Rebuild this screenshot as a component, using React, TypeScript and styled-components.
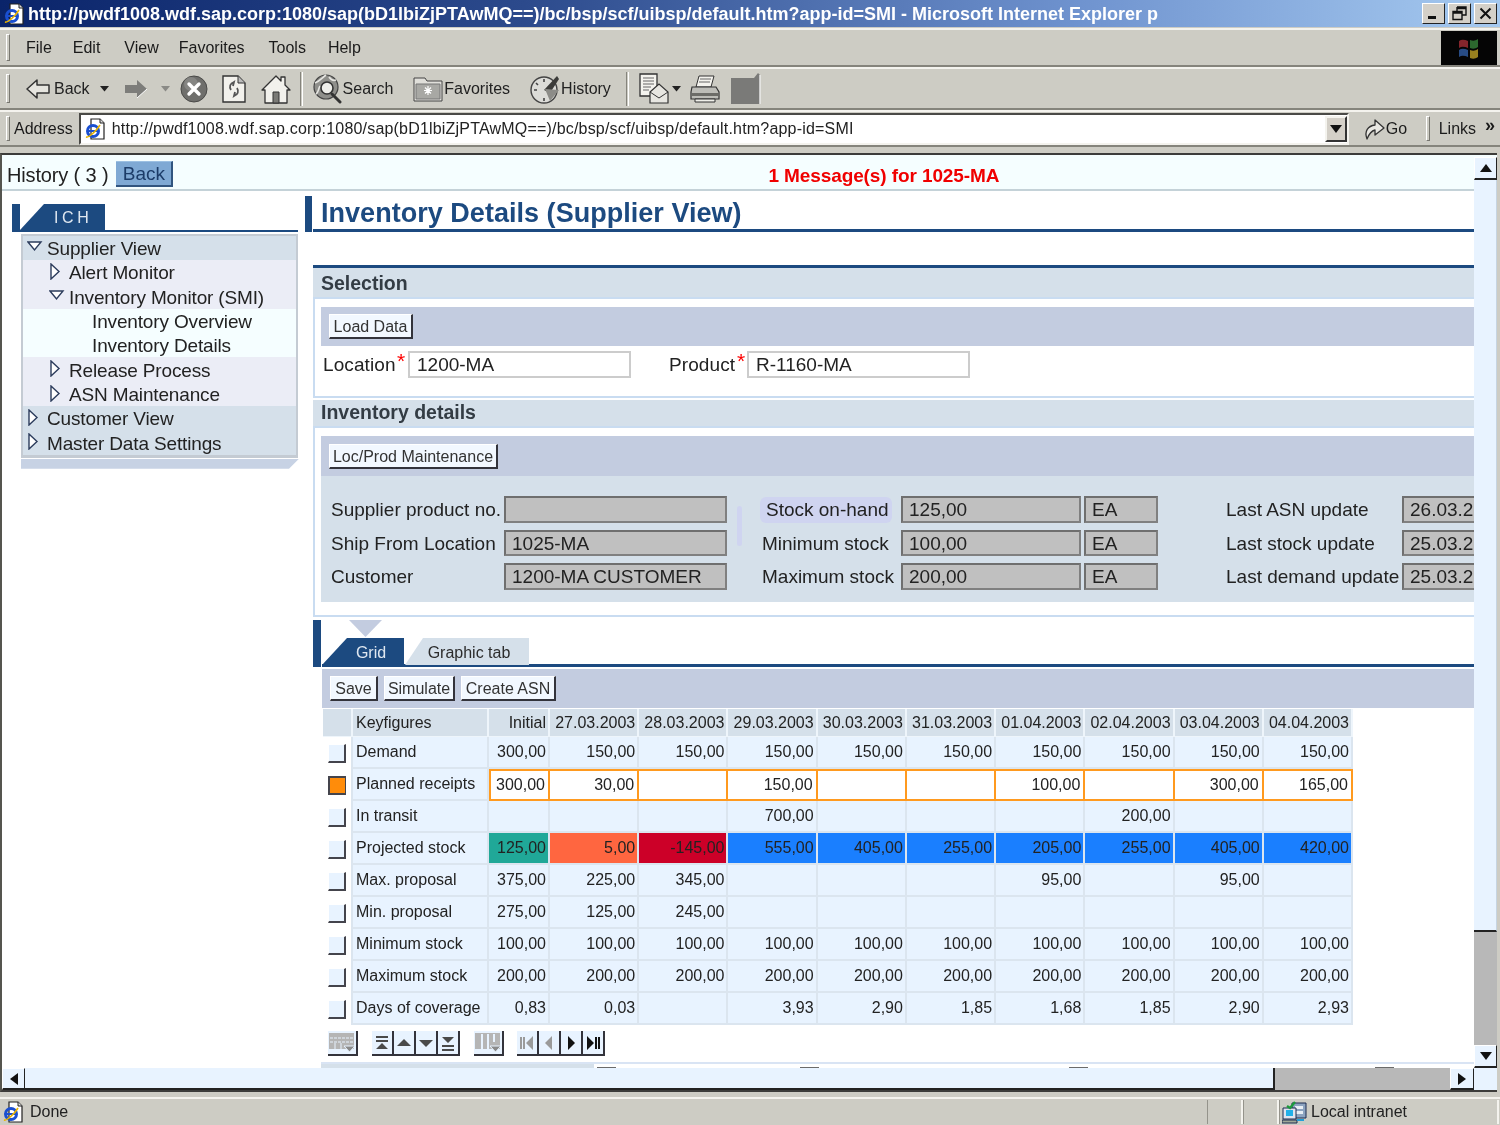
import React from "react";
import styled, { createGlobalStyle } from "styled-components";

const Global = createGlobalStyle`
  html, body { margin: 0; padding: 0; width: 1500px; height: 1125px; overflow: hidden; }
  body { font-family: "Liberation Sans", Arial, sans-serif; color: #1c1c1c; }
  * { box-sizing: border-box; }
`;

const Win = styled.div`
  width: 1500px; height: 1125px; background: #cdccc4; filter: blur(0.35px);
  display: flex; flex-direction: column; overflow: hidden;
`;
const TitleBar = styled.div`
  height: 27px; flex: none; display: flex; align-items: center; padding: 0 3px 0 3px;
  background: linear-gradient(90deg, #0a246a 0%, #2c4a8c 35%, #6f93cf 72%, #a6caf0 100%);
`;
const TitleText = styled.div`
  flex: 1; margin-left: 3px; padding-top: 2px; color: #fff; font-weight: bold; font-size: 18px; white-space: nowrap;
`;
const WinBtn = styled.div`
  width: 23px; height: 21px; margin-left: 3px; background: #d4d0c8;
  border: 1px solid; border-color: #fff #222 #222 #fff; display: flex; align-items: center; justify-content: center;
`;
const Band = styled.div<{ $h: number }>`
  height: ${p => p.$h}px; flex: none; display: flex; align-items: center; position: relative;
  border-top: 2px solid #f4f3ee; border-bottom: 2px solid #85847c; background: #cdccc4;
`;
const MenuBand = styled(Band)`
  margin-top: 1px;
`;
const Grip = styled.div<{ $ml?: number }>`
  width: 4px; height: 76%; flex: none; margin-left: ${p => p.$ml ?? 6}px;
  border: 1px solid; border-color: #fff #77766f #77766f #fff;
`;
const MenuItem = styled.span<{ $ml: number }>`
  margin-left: ${p => p.$ml}px; font-size: 16px; color: #1a1a1a;
`;
const FlagBox = styled.div`
  width: 56px; height: 34px; margin-left: auto; margin-right: 3px; background: #050505;
  display: flex; align-items: center; justify-content: center; flex: none;
`;
const Tool = styled.div<{ $ml: number }>`
  margin-left: ${p => p.$ml}px; display: flex; align-items: center; flex: none; font-size: 16px; color: #222;
`;
const ToolSep = styled.div<{ $ml: number }>`
  margin-left: ${p => p.$ml}px; width: 3px; height: 34px; flex: none;
  border-left: 1px solid #85847c; border-right: 1px solid #fff;
`;
const AddrLabel = styled.span`
  margin-left: 4px; font-size: 16px; color: #1a1a1a;
`;
const AddrBox = styled.div`
  margin-left: 6px; width: 1270px; height: 32px; background: #fff; flex: none;
  border: 2px solid; border-color: #4a4a46 #f4f3ee #f4f3ee #4a4a46;
  display: flex; align-items: center; padding-left: 3px; font-size: 16px; color: #222;
  white-space: nowrap; overflow: hidden;
`;
const AddrUrl = styled.span`
  margin-left: 6px; flex: 1; letter-spacing: 0.19px;
`;
const ComboBtn = styled.div`
  width: 22px; height: 26px; background: #d4d0c8; flex: none;
  border: 2px solid; border-color: #f4f3ee #333 #333 #f4f3ee; display: flex; align-items: center; justify-content: center;
`;
const GoWrap = styled.div`
  margin-left: 15px; display: flex; align-items: center; font-size: 16px; width: 62px; flex: none;
`;
const Links = styled.span`
  margin-left: 9px; font-size: 16px;
`;
const Chevrons = styled.span`
  margin-left: 9px; margin-top: -8px; font-size: 18px; font-weight: bold; line-height: 1;
`;

const Frame = styled.div`
  margin-top: 6px; width: 1497px; height: 939px; flex: none; display: flex; flex-direction: column;
  border-top: 2px solid #3c3c3a; border-left: 2px solid #55554f; border-bottom: 2px solid #3c3c3a; background: #fff;
`;
const FrameTop = styled.div`
  flex: 1; min-height: 0; display: flex;
`;
const Page = styled.div`
  width: 1472px; height: 913px; flex: none; overflow: hidden; display: flex; flex-direction: column; background: #fff;
`;
const HistoryBar = styled.div`
  height: 36px; flex: none; display: flex; align-items: center; padding: 7px 0 0 5px;
  background: #f5feff; border-bottom: 2px solid #c4d2d8; font-size: 20px; color: #222;
`;
const HistoryText = styled.span`
  letter-spacing: -0.15px; white-space: pre;
`;
const BackBtn = styled.div`
  margin-left: 8px; width: 57px; height: 26px; background: #7fa9d4; color: #1c3c68; text-align: center;
  line-height: 24px; font-size: 19px; margin-top: -4px;
  border-right: 2px solid #31557f; border-bottom: 2px solid #31557f; border-top: 1px solid #9cc0e2; 
`;
const Message = styled.span`
  margin-left: 595px; color: #f00000; font-weight: bold; font-size: 19px; letter-spacing: -0.1px;
`;
const Body = styled.div`
  flex: 1; min-height: 0; display: flex; padding-left: 10px;
`;
const NavCol = styled.div`
  width: 286px; flex: none; margin-right: 7px; padding-top: 13px;
`;
const NavHead = styled.div`
  height: 28px; display: flex; align-items: flex-end; border-bottom: 2px solid #1c4a80;
  position: relative;
`;
const NavBar = styled.div`
  position: absolute; left: 0; top: 0; width: 8px; height: 28px; background: #1c4a80;
`;
const NavTab = styled.div`
  margin-left: 8px; width: 85px; height: 26px; color: #dfe7f0; background: #1c4a80; font-size: 16px;
  letter-spacing: 3.6px; padding-left: 34px; line-height: 27px;
  clip-path: polygon(24px 0, 100% 0, 100% 100%, 0 100%);
`;
const NavList = styled.div`
  margin: 2px 0 0 9px; width: 277px; border: 2px solid #c4cbd3; border-bottom-width: 3px;
  display: flex; flex-direction: column;
`;
const NavRow = styled.div<{ $level: number }>`
  height: 24.3px; display: flex; align-items: center; font-size: 19px; letter-spacing: -0.15px; color: #222;
  white-space: nowrap; position: relative; padding-top: 2px;
  padding-left: ${p => [24, 46, 69][p.$level]}px;
  background: ${p => ["#d5e0ea", "#ebedf6", "#f5feff"][p.$level]};
`;
const NavArrow = styled.svg<{ $level: number }>`
  position: absolute; top: 3px; left: ${p => [4, 26][p.$level]}px;
`;
const NavFoot = styled.div`
  margin: 1px 0 0 9px; width: 278px; height: 10px; background: #c7d2e4;
  clip-path: polygon(0 0, 100% 0, calc(100% - 10px) 100%, 0 100%);
`;

const MainCol = styled.div`
  flex: 1; min-width: 0; overflow: hidden; position: relative; display: flex; flex-direction: column;
`;
const TitleRow = styled.div`
  height: 36px; margin-top: 5px; flex: none; display: flex;
`;
const TitleMark = styled.div`
  width: 7px; background: #1c4a80; flex: none; margin-right: 1px;
`;
const PageTitle = styled.h1`
  flex: 1; margin: 0; font-size: 27px; font-weight: bold; color: #1c4a80; padding-left: 8px; line-height: 34px;
  border-bottom: 3px solid #1c4a80; letter-spacing: 0.03px; white-space: nowrap;
`;
const SectionWrap = styled.div<{ $mt: number }>`
  margin: ${p => p.$mt}px 0 0 8px; flex: none;
`;
const SectionHead = styled.div<{ $line?: boolean; $h: number }>`
  height: ${p => p.$h}px; background: #d5e0ea; color: #333c44; font-weight: bold; font-size: 19.5px;
  padding: ${p => (p.$line ? "2px 0 0 8px" : "0 0 2px 8px")};
  display: flex; align-items: center;
  border-top: ${p => (p.$line ? "3px solid #1c4a80" : "none")};
  border-bottom: 2px solid #c9dcf1;
`;
const SectionBody = styled.div<{ $h: number; $pt: number }>`
  height: ${p => p.$h}px; padding: ${p => p.$pt}px 0 0 6px;
  border-left: 2px solid #c9dcf1; border-bottom: 2px solid #c9dcf1;
`;
const ActionBar = styled.div<{ $h: number; $mt?: number }>`
  height: ${p => p.$h}px; margin-top: ${p => p.$mt ?? 0}px; background: #c3cce0; display: flex; align-items: center; padding-left: 8px; gap: 6px;
`;
const ActionBtn = styled.div<{ $w: number }>`
  width: ${p => p.$w}px; height: 25px; background: #f2f8ff; font-size: 16px; color: #333; text-align: center;
  line-height: 23px; white-space: nowrap; border: 1px solid #fff;
  border-right: 2px solid #33333b; border-bottom: 2px solid #33333b;
`;
const SelFields = styled.div`
  display: flex; align-items: center; margin: 5px 0 0 2px; font-size: 19px; color: #222;
`;
const Star = styled.span<{ $w: number }>`
  color: #f00; width: ${p => p.$w}px; font-size: 21px; align-self: flex-start; line-height: 19px; flex: none;
`;
const TextInput = styled.div`
  width: 223px; height: 27px; border: 2px solid #ccc; background: #fff; padding-left: 7px; line-height: 23px; flex: none;
`;
const FieldLabelA = styled.span<{ $w: number; $ml?: number }>`
  width: ${p => p.$w}px; margin-left: ${p => p.$ml ?? 0}px; flex: none; white-space: nowrap; letter-spacing: 0.1px;
`;
const DetailPanel = styled.div`
  background: #d5e0ea; height: 126px; padding: 20px 0 0 10px; display: grid; overflow: hidden;
  grid-template-columns: 173px 223px 35px 139px 180px 3px 74px 68px 176px 100px;
  grid-auto-rows: 26.5px; row-gap: 7px; align-items: center; font-size: 19px; color: #222;
  white-space: nowrap;
`;
const DisabledInput = styled.div<{ $col: number }>`
  grid-column: ${p => p.$col}; height: 26.5px; background: #c0c0c0; border: 2px solid; border-color: #6f6f6f #808080 #808080 #6f6f6f;
  padding-left: 6px; line-height: 24px; overflow: hidden;
`;
const DetailLabel = styled.span<{ $col: number }>`
  grid-column: ${p => p.$col}; position: relative; z-index: 0; padding-top: 2px;
`;
const Brush = styled.span`
  margin-left: 4px; position: relative;
  &::before {
    content: ""; position: absolute; left: -6px; right: -3px; top: -2px; bottom: -3px; z-index: -1;
    background: #cfd4f0; border-radius: 6px;
  }
  &::after {
    content: ""; position: absolute; left: -29px; top: 7px; width: 5px; height: 40px; border-radius: 3px;
    background: #cfd4f0; z-index: -1;
  }
`;
const TabStrip = styled.div`
  position: relative; margin: 3px 0 0 8px; height: 47px; flex: none; padding-left: 9px; display: flex; align-items: flex-end;
`;
const TabMark = styled.div`
  position: absolute; left: 0; top: 0; bottom: 0; width: 8px; background: #1c4a80;
`;
const TabPointer = styled.div`
  position: absolute; left: 36px; top: 0; width: 33px; height: 17px; background: #c3cce0;
  clip-path: polygon(0 0, 100% 0, 50% 100%);
`;
const TabLine = styled.div`
  position: absolute; left: 9px; right: 0; bottom: 0; height: 3px; background: #1c4a80;
`;
const GridTab = styled.div<{ $on?: boolean }>`
  height: 27px; margin-bottom: 2px; font-size: 16px; line-height: 29px; text-align: center;
  width: ${p => (p.$on ? 82 : 124)}px; margin-left: ${p => (p.$on ? 0 : 1)}px;
  padding-left: ${p => (p.$on ? 16 : 4)}px;
  color: ${p => (p.$on ? "#dfe7f0" : "#2c2c2c")}; background: ${p => (p.$on ? "#1c4a80" : "#d5e0ea")};
  clip-path: polygon(${p => (p.$on ? 25 : 18)}px 0, 100% 0, 100% 100%, 0 100%);
`;
const GridArea = styled.div`
  margin-left: 17px; flex: none;
`;
const GridTable = styled.table`
  margin: 1px 0 0 1px; width: 1030px; table-layout: fixed; border-collapse: separate; border-spacing: 0; font-size: 16px; color: #222;
`;
const Th = styled.th<{ $left?: boolean }>`
  height: 28px; background: #d5e0ea; font-weight: normal; padding: 0 2px 0 ${p => (p.$left ? 3 : 0)}px; 
  text-align: ${p => (p.$left ? "left" : "right")}; white-space: nowrap; overflow: hidden;
  border-right: 2px solid #eef5fb; border-bottom: 1px solid #eef5fb;
`;
const Td = styled.td<{ $bg?: string; $orange?: boolean }>`
  height: 32px; padding: 0 ${p => (p.$orange ? 3 : 2)}px 0 0; text-align: right; white-space: nowrap; overflow: hidden;
  background: ${p => p.$bg ?? (p.$orange ? "#fff" : "#e8f3ff")};
  border-right: 2px solid ${p => (p.$orange ? "#ff9a1f" : "#dbe5ef")};
  border-bottom: 2px solid ${p => (p.$orange ? "#ff9a1f" : "#dbe5ef")};
  border-top: ${p => (p.$orange ? "2px solid #ff9a1f" : "0")};
  &:nth-of-type(3) { border-left: ${p => (p.$orange ? "2px solid #ff9a1f" : "0")}; }
`;
const TdName = styled.td`
  height: 32px; padding-left: 3px; background: #e8f3ff; white-space: nowrap; overflow: hidden;
  border-right: 2px solid #dbe5ef; border-bottom: 2px solid #dbe5ef;
`;
const TdCheck = styled.td`
  height: 32px; background: #fff; border-right: 2px solid #dbe5ef; padding-left: 5px;
`;
const RowCheck = styled.div<{ $on?: boolean }>`
  width: 18px; height: 19px; background: ${p => (p.$on ? "#ff8c0a" : "#e8f3ff")};
  border: 1px solid;
  border-color: ${p => (p.$on ? "#44444c" : "#fff")};
  border-right: ${p => (p.$on ? "1px" : "2px")} solid #44444c; border-bottom: 2px solid #44444c;
  ${p => p.$on && "border-top-width:2px;border-left-width:2px;"}
`;
const Pager = styled.div`
  margin: 6px 0 0 6px; display: flex; height: 26px;
`;
const PagerBtn = styled.div<{ $w?: number; $ml?: number }>`
  width: ${p => p.$w ?? 22}px; height: 25px; margin-left: ${p => p.$ml ?? 0}px; background: #e8f3ff; flex: none;
  border-bottom: 2px solid #33333b; border-right: 2px solid #33333b;
  display: flex; align-items: center; justify-content: center;
`;
const ClipStrip = styled.div`
  margin: 5px 0 0 -1px; height: 8px; width: 1153px; display: flex; border-top: 2px solid #d9e4f4; align-items: flex-start;
`;
const ClipBar = styled.div`
  width: 273px; height: 6px; background: #d5e0ea; flex: none;
`;
const ClipMark = styled.div<{ $ml: number }>`
  margin: 3px 0 0 ${p => p.$ml}px; width: 19px; height: 2px; background: #6b6b6b; flex: none;
`;

const VScroll = styled.div`
  width: 23px; height: 913px; flex: none; display: flex; flex-direction: column; background: #b8b8b8;
`;
const ScrollBtn = styled.div<{ $w?: number; $h?: number }>`
  width: ${p => p.$w ?? 23}px; height: ${p => p.$h ?? 23}px; background: #e8f3ff; flex: none;
  border: 1px solid #fff; border-right: 1px solid #222; border-bottom: 2px solid #222;
  display: flex; align-items: center; justify-content: center;
`;
const VThumb = styled.div`
  height: 752px; flex: none; background: #e8f3ff; border-bottom: 2px solid #222; border-right: 1px solid #c6d4e2;
`;
const VGap = styled.div`
  flex: 1;
`;
const VTop = styled.div`
  height: 2px; background: #f5feff; flex: none;
`;
const HScroll = styled.div`
  height: 22px; flex: none; display: flex; background: #e8f3ff;
`;
const HThumb = styled.div`
  width: 1250px; flex: none; background: #e8f3ff; border-right: 2px solid #222; border-bottom: 2px solid #222;
`;
const HTrack = styled.div`
  width: 175px; flex: none; background: #b8b8b8;
`;
const Status = styled.div`
  margin-top: 5px; height: 28px; flex: none; display: flex; align-items: center; padding-left: 2px;
  border-top: 2px solid #f4f3ee; font-size: 16px; color: #222; background: #cdccc4;
`;
const StatusCell = styled.div<{ $w: number }>`
  width: ${p => p.$w}px; height: 24px; flex: none; display: flex; align-items: center; padding-left: 2px;
  border-right: 2px solid #f4f3ee; border-left: 1px solid #94938b; 
`;
const StatusDone = styled.span`
  margin-left: 6px; width: 1177px; flex: none;
`;
const StatusText = styled.span`
  margin-left: 4px;
`;

/* ---------- drawings ---------- */
const IeLogo = ({ s = 22 }: { s?: number }) => (
  <svg width={s} height={s} viewBox="0 0 22 22">
    <path d="M7 1h9l4 4v16H7z" fill="#fff" stroke="#222" strokeWidth="1.2" />
    <path d="M16 1v4h4" fill="#ddd" stroke="#222" />
    <circle cx="9" cy="13" r="5.500" fill="none" stroke="#1a4fd0" strokeWidth="3" />
    <path d="M4 13h10" stroke="#1a4fd0" strokeWidth="2" />
    <path d="M2 19C5 20 13 12 16 7" fill="none" stroke="#e8b400" strokeWidth="1.600" />
  </svg>
);
const BackIco = () => (
  <svg width="24" height="22" viewBox="0 0 24 22">
    <path d="M1 11 11 2v5h12v8H11v5z" fill="#e6e5df" stroke="#333" strokeWidth="1.500" strokeLinejoin="round" />
  </svg>
);
const FwdIco = () => (
  <svg width="24" height="22" viewBox="0 0 24 22">
    <path d="M23 11 13 2v5H1v8h12v5z" fill="#7d7d7a" />
    <path d="M13 20 23 11" stroke="#fff" strokeWidth="1" />
  </svg>
);
const Drop = ({ c = "#222" }: { c?: string }) => (
  <svg width="9" height="6" viewBox="0 0 9 6"><path d="M0 0h9L4.500 5.500z" fill={c} /></svg>
);
const StopIco = () => (
  <svg width="28" height="28" viewBox="0 0 28 28">
    <circle cx="14" cy="14" r="13" fill="#6f6f6c" stroke="#4a4a48" />
    <circle cx="11" cy="9" r="7" fill="#8f8f8b" opacity=".7" />
    <path d="M9 9 19 19M19 9 9 19" stroke="#fff" strokeWidth="3.400" strokeLinecap="round" />
  </svg>
);
const RefreshIco = () => (
  <svg width="26" height="30" viewBox="0 0 26 30">
    <path d="M2 2h15l7 7v19H2z" fill="#f2f1ec" stroke="#333" strokeWidth="1.400" />
    <path d="M17 2v7h7" fill="#bbb" stroke="#333" />
    <path d="M13 8c-4 1-5 5-3 8M10 10l3-2-1 4M13 22c4-1 5-5 3-8M16 20l-3 2 1-4" fill="none" stroke="#555" strokeWidth="1.800" />
  </svg>
);
const HomeIco = () => (
  <svg width="30" height="30" viewBox="0 0 30 30">
    <path d="M1 16 15 2l5 5V3h4v8l5 5h-3v13H4V16z" fill="#f2f1ec" stroke="#333" strokeWidth="1.300" strokeLinejoin="round" />
    <path d="M12 29V18h6v11z" fill="#7a7a76" stroke="#333" />
  </svg>
);
const SearchIco = () => (
  <svg width="30" height="30" viewBox="0 0 30 30">
    <circle cx="14" cy="13" r="12" fill="#8f8f8b" stroke="#444" strokeWidth="1.200" />
    <path d="M3 9c5-2 8-6 11-8M24 6c-3 1-5 0-7-3M4 20c3-2 2-5 4-8" fill="none" stroke="#e6e6e2" strokeWidth="1.600" />
    <circle cx="15" cy="14" r="6" fill="#eeeeea" stroke="#333" strokeWidth="1.600" />
    <path d="M20 20 28 28" stroke="#333" strokeWidth="3" strokeLinecap="round" />
  </svg>
);
const FavIco = () => (
  <svg width="30" height="27" viewBox="0 0 30 27">
    <path d="M1 8V3h11l2 3h15v20H1z" fill="#e0dfda" stroke="#444" />
    <path d="M3 9h24v15H3z" fill="#a8a8a4" stroke="#777" />
    <path d="M15 11v9M11 15.500h8M12 12.500l6 6M18 12.500l-6 6" stroke="#fff" strokeWidth="1.200" />
  </svg>
);
const HistIco = () => (
  <svg width="30" height="30" viewBox="0 0 30 30">
    <circle cx="14" cy="16" r="13" fill="#dcdcd8" stroke="#444" strokeWidth="1.400" />
    <path d="M14 5v3M4 16h3M14 24v3M22 22l-2-2M6 9l2 2" stroke="#444" strokeWidth="1.600" />
    <path d="M14 16 27 2l2 3-9 14-6-3z" fill="#3c3c3a" />
    <path d="M15 15 29 16 20 27z" fill="#8c8c88" />
  </svg>
);
const EditIco = () => (
  <svg width="30" height="31" viewBox="0 0 30 31">
    <path d="M1 1h17v22H1z" fill="#f4f3ee" stroke="#333" strokeWidth="1.300" />
    <path d="M4 5h11M4 8h11M4 11h11M4 14h8M4 17h6" stroke="#666" strokeWidth="1.200" />
    <path d="M11 19 20 11l9 8v11H11z" fill="#e7e6e1" stroke="#333" strokeWidth="1.200" />
    <path d="M11 19l9 6 9-6" fill="none" stroke="#333" />
  </svg>
);
const PrintIco = () => (
  <svg width="30" height="28" viewBox="0 0 30 28">
    <path d="M9 1h15l-3 11H6z" fill="#f4f3ee" stroke="#333" />
    <path d="M10 4h11M9 7h11" stroke="#666" />
    <path d="M2 12h24l3 5v7H1v-7z" fill="#bdbdb8" stroke="#333" strokeWidth="1.200" />
    <path d="M2 18h26v3H2z" fill="#6c6c68" />
    <path d="M5 24h20v3H5z" fill="#efefe9" stroke="#333" />
  </svg>
);
const GrayBoxIco = () => (
  <svg width="30" height="31" viewBox="0 0 30 31">
    <path d="M0 5h23l4-5 2 2v29H0z" fill="#7a7a78" />
    <path d="M29 2v29" stroke="#eee" strokeWidth="1.400" />
  </svg>
);
const GoIco = () => (
  <svg width="22" height="24" viewBox="0 0 22 24">
    <path d="M3 22C0 14 4 9 11 8V3l9 8-9 7v-5c-4 1-6 4-8 9z" fill="#e8e7e2" stroke="#333" strokeWidth="1.300" strokeLinejoin="round" />
  </svg>
);
const WinFlag = () => (
  <svg width="26" height="24" viewBox="0 0 26 24" opacity=".75">
    <path d="M3 5c3-2 6-1 9 0v7c-3-1-6-2-9 0z" fill="#b0303a" />
    <path d="M14 4c3 1 5 1 8-1v8c-3 2-5 2-8 1z" fill="#3a8a3c" />
    <path d="M3 14c3-2 6-1 9 0v7c-3-1-6-2-9 0z" fill="#3464b0" />
    <path d="M14 14c3 1 5 1 8-1v8c-3 2-5 2-8 1z" fill="#c8a828" />
  </svg>
);
const ArrowTri = ({ dir, c = "#111", s = 12 }: { dir: "u" | "d" | "l" | "r"; c?: string; s?: number }) => {
  const d = { u: "M6 2 12 10H0z", d: "M0 2h12L6 10z", l: "M2 6 10 0v12z", r: "M10 6 2 0v12z" }[dir];
  return <svg width={s} height={s} viewBox="0 0 12 12"><path d={d} fill={c} /></svg>;
};
const IntranetIco = () => (
  <svg width="25" height="24" viewBox="0 0 25 24">
    <path d="M10 3h14v15H10z" fill="#8da4c0" stroke="#1c2c50" />
    <path d="M13 6h8v3h-8zM13 11h8v3h-8z" fill="#e8eef4" />
    <path d="M1 8h13v11H1z" fill="#dfe4ee" stroke="#1c2c50" />
    <path d="M4 10h7v6H4z" fill="#22b0e8" />
    <path d="M0 20h15v3H0z" fill="#a0a898" stroke="#1c2c50" />
    <path d="M5 6l3 2 5-6" fill="none" stroke="#1c9a3c" strokeWidth="2.400" />
    <path d="M15 20h7" stroke="#22a0d8" strokeWidth="2" />
  </svg>
);
const TableSetIco = () => (
  <svg width="26" height="20" viewBox="0 0 26 20">
    <path d="M0 0h25v16H0z" fill="#b5b5b5" />
    <path d="M1 5h23M1 9h23" stroke="#e8f3ff" strokeWidth="1" strokeDasharray="3 1" />
    <path d="M6 10v6M12 10v6" stroke="#e8f3ff" />
    <path d="M15 13h11l-5.500 6z" fill="#8a8a8a" stroke="#e8f3ff" />
  </svg>
);
const ColsIco = () => (
  <svg width="26" height="20" viewBox="0 0 26 20">
    <path d="M0 0h25v16H0z" fill="#b5b5b5" />
    <path d="M7 1v15M13 1v15M19 1v8" stroke="#e8f3ff" strokeWidth="2" />
    <path d="M15 13h11l-5.500 6z" fill="#8a8a8a" stroke="#e8f3ff" />
  </svg>
);
const PageIco = ({ d, c = "#4a4a4a" }: { d: string; c?: string }) => (
  <svg width="16" height="16" viewBox="0 0 16 16"><path d={d} fill={c} /></svg>
);

/* ---------- data ---------- */
const dates = ["27.03.2003", "28.03.2003", "29.03.2003", "30.03.2003", "31.03.2003", "01.04.2003", "02.04.2003", "03.04.2003", "04.04.2003"];
type Row = { name: string; on?: boolean; orange?: boolean; colors?: string[]; vals: string[] };
const B = "#1a7fff";
const rows: Row[] = [
  { name: "Demand", vals: ["300,00", "150,00", "150,00", "150,00", "150,00", "150,00", "150,00", "150,00", "150,00", "150,00"] },
  { name: "Planned receipts", on: true, orange: true, vals: ["300,00", "30,00", "", "150,00", "", "", "100,00", "", "300,00", "165,00"] },
  { name: "In transit", vals: ["", "", "", "700,00", "", "", "", "200,00", "", ""] },
  { name: "Projected stock", colors: ["#20a898", "#ff6640", "#cc0028", B, B, B, B, B, B, B], vals: ["125,00", "5,00", "-145,00", "555,00", "405,00", "255,00", "205,00", "255,00", "405,00", "420,00"] },
  { name: "Max. proposal", vals: ["375,00", "225,00", "345,00", "", "", "", "95,00", "", "95,00", ""] },
  { name: "Min. proposal", vals: ["275,00", "125,00", "245,00", "", "", "", "", "", "", ""] },
  { name: "Minimum stock", vals: ["100,00", "100,00", "100,00", "100,00", "100,00", "100,00", "100,00", "100,00", "100,00", "100,00"] },
  { name: "Maximum stock", vals: ["200,00", "200,00", "200,00", "200,00", "200,00", "200,00", "200,00", "200,00", "200,00", "200,00"] },
  { name: "Days of coverage", vals: ["0,83", "0,03", "", "3,93", "2,90", "1,85", "1,68", "1,85", "2,90", "2,93"] },
];
const nav: { label: string; level: number; arrow?: "r" | "d" }[] = [
  { label: "Supplier View", level: 0, arrow: "d" },
  { label: "Alert Monitor", level: 1, arrow: "r" },
  { label: "Inventory Monitor (SMI)", level: 1, arrow: "d" },
  { label: "Inventory Overview", level: 2 },
  { label: "Inventory Details", level: 2 },
  { label: "Release Process", level: 1, arrow: "r" },
  { label: "ASN Maintenance", level: 1, arrow: "r" },
  { label: "Customer View", level: 0, arrow: "r" },
  { label: "Master Data Settings", level: 0, arrow: "r" },
];
const URL_TEXT = "http://pwdf1008.wdf.sap.corp:1080/sap(bD1lbiZjPTAwMQ==)/bc/bsp/scf/uibsp/default.htm?app-id=SMI";

export default function App() {
  return (
    <Win>
      <Global />
      <TitleBar>
        <IeLogo />
        <TitleText>{URL_TEXT} - Microsoft Internet Explorer p</TitleText>
        <WinBtn><svg width="13" height="13" viewBox="0 0 13 13"><path d="M1 9h8v3H1z" fill="#111" /></svg></WinBtn>
        <WinBtn><svg width="15" height="15" viewBox="0 0 15 15"><path d="M5 1h9v8h-4M5 1v4M5 2.500h9M1 5.500h9v8H1zM1 7h9" fill="none" stroke="#111" strokeWidth="1.400" /></svg></WinBtn>
        <WinBtn><svg width="13" height="13" viewBox="0 0 13 13"><path d="M1.500 1.500 11.500 11.500M11.500 1.500 1.500 11.500" stroke="#111" strokeWidth="2" /></svg></WinBtn>
      </TitleBar>
      <MenuBand $h={39}>
        <Grip />
        <MenuItem $ml={16}>File</MenuItem>
        <MenuItem $ml={21}>Edit</MenuItem>
        <MenuItem $ml={24}>View</MenuItem>
        <MenuItem $ml={20}>Favorites</MenuItem>
        <MenuItem $ml={24}>Tools</MenuItem>
        <MenuItem $ml={22}>Help</MenuItem>
        <FlagBox><WinFlag /></FlagBox>
      </MenuBand>
      <Band $h={43}>
        <Grip />
        <Tool $ml={16}><BackIco /></Tool>
        <Tool $ml={4}>Back</Tool>
        <Tool $ml={10}><Drop /></Tool>
        <Tool $ml={15}><FwdIco /></Tool>
        <Tool $ml={13}><Drop c="#8a8a86" /></Tool>
        <Tool $ml={10}><StopIco /></Tool>
        <Tool $ml={13}><RefreshIco /></Tool>
        <Tool $ml={14}><HomeIco /></Tool>
        <ToolSep $ml={9} />
        <Tool $ml={9}><SearchIco /></Tool>
        <Tool $ml={1}>Search</Tool>
        <Tool $ml={20}><FavIco /></Tool>
        <Tool $ml={1}>Favorites</Tool>
        <Tool $ml={20}><HistIco /></Tool>
        <Tool $ml={1}>History</Tool>
        <ToolSep $ml={15} />
        <Tool $ml={10}><EditIco /></Tool>
        <Tool $ml={3}><Drop /></Tool>
        <Tool $ml={9}><PrintIco /></Tool>
        <Tool $ml={11}><GrayBoxIco /></Tool>
      </Band>
      <Band $h={37}>
        <Grip />
        <AddrLabel>Address</AddrLabel>
        <AddrBox>
          <IeLogo />
          <AddrUrl>{URL_TEXT}</AddrUrl>
          <ComboBtn><ArrowTri dir="d" /></ComboBtn>
        </AddrBox>
        <GoWrap><GoIco />Go</GoWrap>
        <Grip $ml={0} />
        <Links>Links</Links>
        <Chevrons>»</Chevrons>
      </Band>
      <Frame>
        <FrameTop>
          <Page>
            <HistoryBar>
              <HistoryText>History ( 3 )</HistoryText>
              <BackBtn>Back</BackBtn>
              <Message>1 Message(s) for 1025-MA</Message>
            </HistoryBar>
            <Body>
              <NavCol>
                <NavHead>
                  <NavBar />
                  <NavTab>ICH</NavTab>
                </NavHead>
                <NavList>
                  {nav.map(n => (
                    <NavRow key={n.label} $level={n.level}>
                      {n.arrow && (
                        <NavArrow $level={n.level} width="16" height="17" viewBox="0 0 16 17">
                          {n.arrow === "r"
                            ? <path d="M2 1 10 8.500 2 16z" fill="#fff" stroke="#2c3c5c" strokeWidth="1.400" />
                            : <path d="M1 3h13L7.500 11z" fill="#fff" stroke="#2c3c5c" strokeWidth="1.400" />}
                        </NavArrow>
                      )}
                      {n.label}
                    </NavRow>
                  ))}
                </NavList>
                <NavFoot />
              </NavCol>
              <MainCol>
                <TitleRow>
                  <TitleMark />
                  <PageTitle>Inventory Details (Supplier View)</PageTitle>
                </TitleRow>
                <SectionWrap $mt={33}>
                  <SectionHead $line $h={34}>Selection</SectionHead>
                  <SectionBody $h={99} $pt={8}>
                    <ActionBar $h={39}><ActionBtn $w={84}>Load Data</ActionBtn></ActionBar>
                    <SelFields>
                      <FieldLabelA $w={74}>Location</FieldLabelA>
                      <Star $w={11}>*</Star>
                      <TextInput>1200-MA</TextInput>
                      <FieldLabelA $w={68} $ml={38}>Product</FieldLabelA>
                      <Star $w={10}>*</Star>
                      <TextInput>R-1160-MA</TextInput>
                    </SelFields>
                  </SectionBody>
                </SectionWrap>
                <SectionWrap $mt={2}>
                  <SectionHead $h={28}>Inventory details</SectionHead>
                  <SectionBody $h={189} $pt={8}>
                    <ActionBar $h={40}><ActionBtn $w={169}>Loc/Prod Maintenance</ActionBtn></ActionBar>
                    <DetailPanel>
                      <DetailLabel $col={1}>Supplier product no.</DetailLabel>
                      <DisabledInput $col={2} />
                      <DetailLabel $col={4}><Brush>Stock on-hand</Brush></DetailLabel>
                      <DisabledInput $col={5}>125,00</DisabledInput>
                      <DisabledInput $col={7}>EA</DisabledInput>
                      <DetailLabel $col={9}>Last ASN update</DetailLabel>
                      <DisabledInput $col={10}>26.03.2003</DisabledInput>

                      <DetailLabel $col={1}>Ship From Location</DetailLabel>
                      <DisabledInput $col={2}>1025-MA</DisabledInput>
                      <DetailLabel $col={4}>Minimum stock</DetailLabel>
                      <DisabledInput $col={5}>100,00</DisabledInput>
                      <DisabledInput $col={7}>EA</DisabledInput>
                      <DetailLabel $col={9}>Last stock update</DetailLabel>
                      <DisabledInput $col={10}>25.03.2003</DisabledInput>

                      <DetailLabel $col={1}>Customer</DetailLabel>
                      <DisabledInput $col={2}>1200-MA CUSTOMER</DisabledInput>
                      <DetailLabel $col={4}>Maximum stock</DetailLabel>
                      <DisabledInput $col={5}>200,00</DisabledInput>
                      <DisabledInput $col={7}>EA</DisabledInput>
                      <DetailLabel $col={9}>Last demand update</DetailLabel>
                      <DisabledInput $col={10}>25.03.2003</DisabledInput>
                    </DetailPanel>
                  </SectionBody>
                </SectionWrap>
                <TabStrip>
                  <TabMark />
                  <TabPointer />
                  <TabLine />
                  <GridTab $on>Grid</GridTab>
                  <GridTab>Graphic tab</GridTab>
                </TabStrip>
                <GridArea>
                  <ActionBar $h={39} $mt={2}>
                    <ActionBtn $w={48}>Save</ActionBtn>
                    <ActionBtn $w={71}>Simulate</ActionBtn>
                    <ActionBtn $w={95}>Create ASN</ActionBtn>
                  </ActionBar>
                  <GridTable>
                    <colgroup>
                      <col width={30} />
                      <col width={136} />
                      <col width={61} />
                      {dates.map(d => <col key={d} />)}
                    </colgroup>
                    <thead>
                      <tr>
                        <Th />
                        <Th $left>Keyfigures</Th>
                        <Th>Initial</Th>
                        {dates.map(d => <Th key={d}>{d}</Th>)}
                      </tr>
                    </thead>
                    <tbody>
                      {rows.map(r => (
                        <tr key={r.name}>
                          <TdCheck><RowCheck $on={r.on} /></TdCheck>
                          <TdName>{r.name}</TdName>
                          {r.vals.map((v, i) => (
                            <Td key={i} $orange={r.orange} $bg={r.colors?.[i]}>{v}</Td>
                          ))}
                        </tr>
                      ))}
                    </tbody>
                  </GridTable>
                  <Pager>
                    <PagerBtn $w={30}><TableSetIco /></PagerBtn>
                    <PagerBtn $ml={14}><PageIco d="M2 1h12v2H2zM2 5h12v2H2zM8 8l6 6H2z" /></PagerBtn>
                    <PagerBtn><PageIco d="M8 4l7 7H1z" /></PagerBtn>
                    <PagerBtn><PageIco d="M1 5h14l-7 7z" /></PagerBtn>
                    <PagerBtn><PageIco d="M2 2h12L8 8zM2 10h12v2H2zM2 14h12v2H2z" /></PagerBtn>
                    <PagerBtn $w={30} $ml={14}><ColsIco /></PagerBtn>
                    <PagerBtn $ml={13}><PageIco c="#9a9a9a" d="M1 2h2v12H1zM4 2h2v12H4zM14 1v14L7 8z" /></PagerBtn>
                    <PagerBtn><PageIco c="#9a9a9a" d="M11 1v14L4 8z" /></PagerBtn>
                    <PagerBtn><PageIco c="#111" d="M5 1v14l7-7z" /></PagerBtn>
                    <PagerBtn><PageIco c="#111" d="M2 1v14l7-7zM10 2h2v12h-2zM13 2h2v12h-2z" /></PagerBtn>
                  </Pager>
                  <ClipStrip>
                    <ClipBar />
                    <ClipMark $ml={3} />
                    <ClipMark $ml={184} />
                    <ClipMark $ml={250} />
                    <ClipMark $ml={287} />
                  </ClipStrip>
                </GridArea>
              </MainCol>
            </Body>
          </Page>
          <VScroll>
            <VTop />
            <ScrollBtn><ArrowTri dir="u" /></ScrollBtn>
            <VThumb />
            <VGap />
            <ScrollBtn><ArrowTri dir="d" /></ScrollBtn>
          </VScroll>
        </FrameTop>
        <HScroll>
          <ScrollBtn $h={22} $w={23}><ArrowTri dir="l" /></ScrollBtn>
          <HThumb />
          <HTrack />
          <ScrollBtn $h={22} $w={24}><ArrowTri dir="r" /></ScrollBtn>
        </HScroll>
      </Frame>
      <Status>
        <IeLogo />
        <StatusDone>Done</StatusDone>
        <StatusCell $w={36} />
        <StatusCell $w={36} />
        <StatusCell $w={220}>
          <IntranetIco />
          <StatusText>Local intranet</StatusText>
        </StatusCell>
      </Status>
    </Win>
  );
}
